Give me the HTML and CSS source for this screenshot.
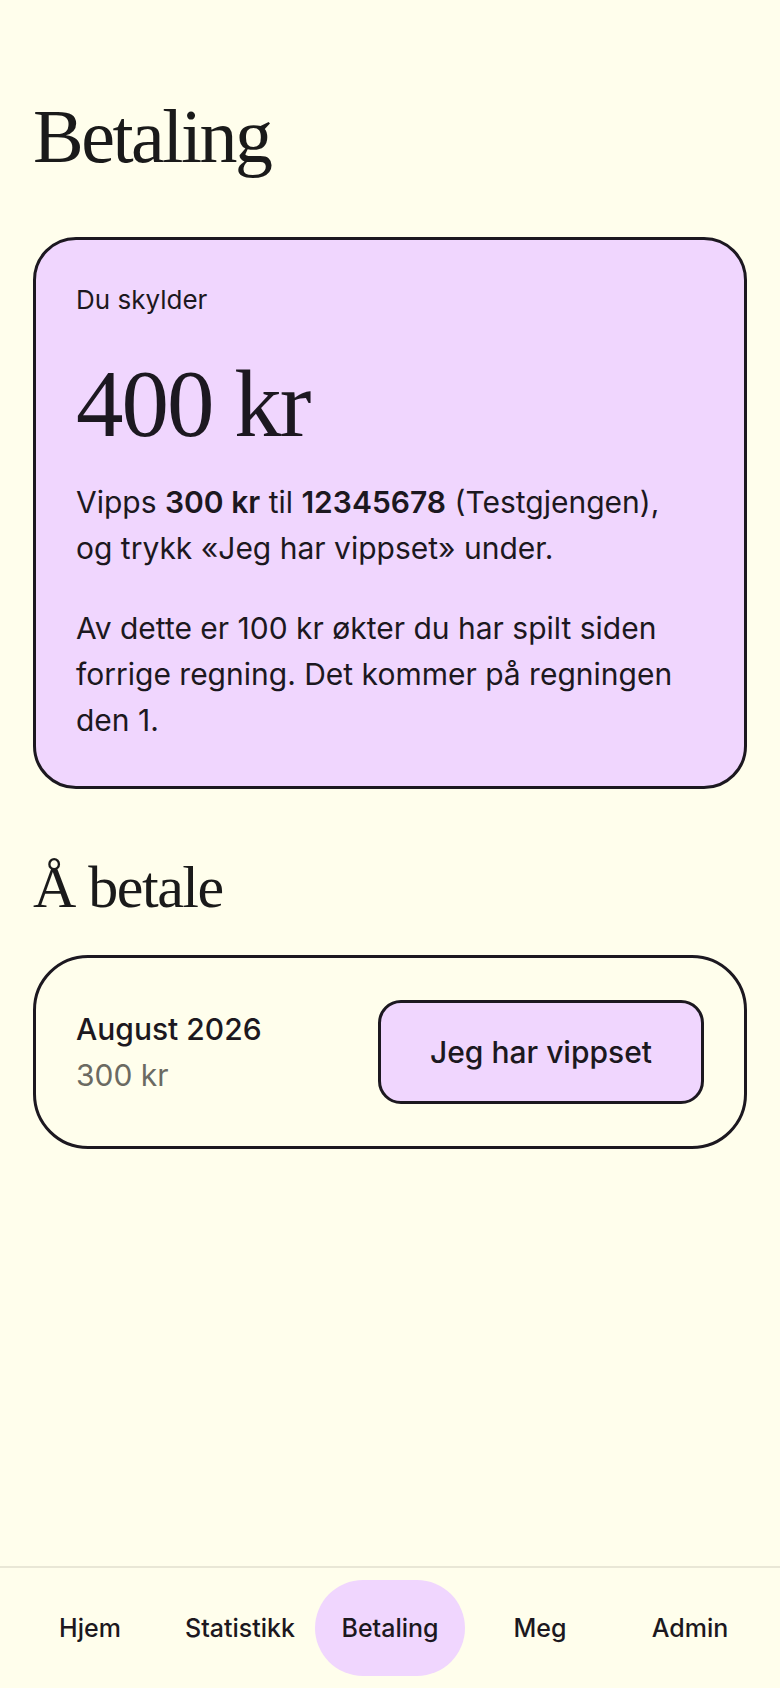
FILE: index.html
```html
<!DOCTYPE html>
<html lang="no">
<head>
    <meta charset="UTF-8">
    <meta name="viewport" content="width=device-width, initial-scale=1.0">
    <title>Betaling</title>
    <link rel="stylesheet" href="styles.css">
</head>
<body>

<main class="page">
    <h1 class="page-title">Betaling</h1>

    <!-- Saldo -->
    <section class="balance-card">
        <p class="balance-label">Du skylder</p>
        <p class="balance-amount">400 kr</p>
        <p class="balance-text">Vipps <strong>300 kr</strong> til <strong>12345678</strong> (Testgjengen), og trykk «Jeg har vippset» under.</p>
        <p class="balance-text">Av dette er 100 kr økter du har spilt siden forrige regning. Det kommer på regningen den 1.</p>
    </section>

    <h2 class="section-title">Å betale</h2>

    <!-- Regninger -->
    <div class="bill-card">
        <div class="bill-info">
            <div class="bill-month">August 2026</div>
            <div class="bill-sum">300 kr</div>
        </div>
        <button class="bill-button">Jeg har vippset</button>
    </div>
</main>

<nav class="tab-bar">
    <a class="tab" href="#">Hjem</a>
    <a class="tab" href="#">Statistikk</a>
    <a class="tab active" href="#">Betaling</a>
    <a class="tab" href="#">Meg</a>
    <a class="tab" href="#">Admin</a>
</nav>

</body>
</html>
```

FILE: styles.css
```css
body {
    font-family: Inter, "Noto Sans", sans-serif;
    margin: 0;
    padding: 0;
    background-color: #fffeec; /* Krem bakgrunn */
    color: #1c1820;
}
.page {
    padding: 91px 33px 140px;
}
.page-title {
    font-family: "Liberation Serif", serif;
    font-weight: 400;
    font-size: 76px;
    line-height: 1.2;
    letter-spacing: -2.5px;
    margin: 0 0 55px;
    color: #1a1a1a;
}
.balance-card {
    background-color: #f0d6fe; /* Lilla */
    border: 3px solid #1c1820;
    border-radius: 43px;
    padding: 44px 40px 43px;
}
.balance-card p {
    margin: 0;
}
.balance-label {
    font-size: 26px;
    line-height: 1.2;
}
.balance-amount {
    font-family: "Liberation Serif", serif;
    font-size: 95px;
    line-height: 1.1;
    letter-spacing: -2px;
    margin-top: 37px !important;
}
.balance-text {
    font-size: 30px;
    line-height: 46px;
    margin-top: 22px !important;
}
.balance-text + .balance-text {
    margin-top: 34px !important;
}
.balance-text strong {
    font-weight: 600;
}
.section-title {
    font-family: "Liberation Serif", serif;
    font-weight: 400;
    font-size: 60px;
    line-height: 1.2;
    letter-spacing: -1.5px;
    margin: 62px 0 32px;
    color: #1a1a1a;
}
.bill-card {
    display: flex;
    justify-content: space-between;
    align-items: center;
    border: 3px solid #1c1820;
    border-radius: 55px;
    padding: 42px 40px;
}
.bill-info {
    font-size: 30px;
    line-height: 46px;
}
.bill-month {
    font-weight: 500;
}
.bill-sum {
    color: #6b6a62; /* Grå */
}
.bill-button {
    font-family: inherit;
    font-size: 30px;
    font-weight: 500;
    line-height: 36px;
    color: #1c1820;
    background-color: #f0d6fe;
    border: 3px solid #1c1820;
    border-radius: 23px;
    padding: 31px 0;
    width: 326px;
    cursor: pointer;
}
.tab-bar {
    position: fixed;
    left: 0;
    right: 0;
    bottom: 0;
    display: grid;
    grid-template-columns: repeat(5, 1fr);
    padding: 12px 15px;
    border-top: 2px solid #e9e7d6;
    background-color: #fffeec;
}
.tab {
    display: flex;
    align-items: center;
    justify-content: center;
    height: 96px;
    font-size: 25px;
    font-weight: 500;
    color: #1c1820;
    text-decoration: none;
    border-radius: 48px;
}
.tab.active {
    background-color: #f0d6fe;
}
```
